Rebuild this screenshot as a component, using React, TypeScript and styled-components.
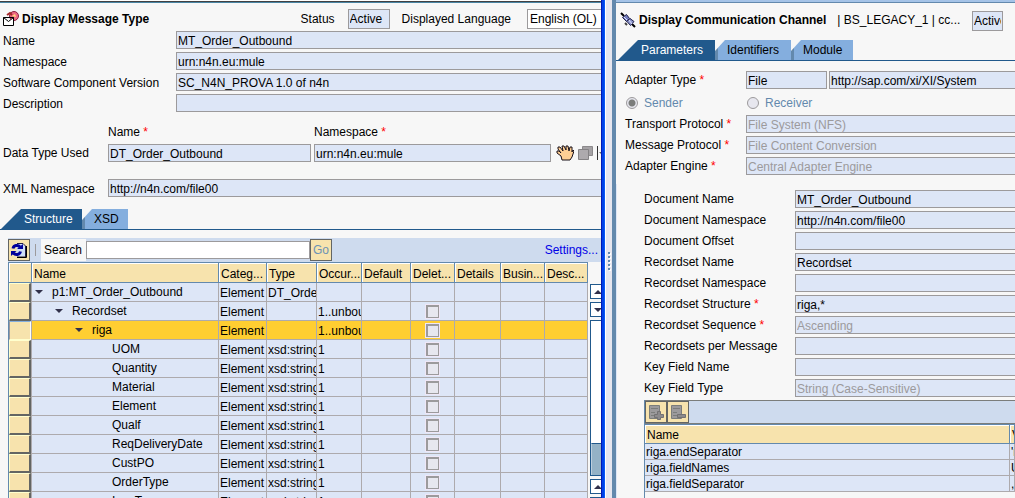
import React from "react";
import styled, { createGlobalStyle, css } from "styled-components";

const c = {
  panel: "#f7f7f7",
  field: "#dde6f7",
  border: "#9c9a9c",
  frame: "#6389ad",
  deep: "#21598c",
  tab: "#84aede",
  head: "#f7e3ad",
  bar: "#cedbee",
  grid: "#adaaad",
  gold: "#ffce31",
  shade: "#636563",
};

const Global = createGlobalStyle`
  *, *::before, *::after { box-sizing: border-box; }
  body { margin: 0; background: ${c.panel}; }
  body, input, select, button, table { font: 12px/16px "Liberation Sans", Arial, sans-serif; color: #000; }
`;

const Desktop = styled.div`
  display: grid;
  grid-template-columns: minmax(0, 601fr) 4px minmax(0, 410fr);
  height: 100vh;
  overflow: hidden;
`;

const Pane = styled.section`
  display: flex;
  flex-direction: column;
  min-width: 0;
  min-height: 0;
  overflow: hidden;
  background: ${c.panel};
  white-space: nowrap;
`;

const MessagePane = styled(Pane)`
  border-top: 1px solid #fff;
`;

const TopEdge = styled.div`
  flex: none;
  height: 2px;
  background: #4a86a5;
  border-top: 1px solid #424142;
`;

const WindowEdge = styled.div`
  background: linear-gradient(to right, #0018b5 0 1px, #0041e7 1px 3px, #0859f7 3px);
`;

const TitleRow = styled.header<{ $right?: boolean }>`
  display: flex;
  flex: none;
  align-items: center;
  height: ${(p) => (p.$right ? 37 : 28)}px;
  padding: ${(p) => (p.$right ? "0 0 4px 4px" : "3px 0 0 3px")};
`;

const Title = styled.h1`
  flex: none;
  margin: 0 0 0 3px;
  font-size: 12px;
  line-height: 16px;
`;

const Grow = styled.div`
  flex: 1;
`;

const StatusGroup = styled.label<{ $gap: number }>`
  display: flex;
  flex: none;
  align-items: center;
  gap: ${(p) => p.$gap}px;
  margin-left: 12px;
`;

const Field = styled.input<{ $muted?: boolean }>`
  display: block;
  width: 100%;
  min-width: 0;
  height: 18px;
  margin: 0;
  padding: 1px 1px 0;
  border: 1px solid ${c.border};
  border-radius: 0;
  outline: 0;
  background: ${c.field};
  color: ${(p) => (p.$muted ? "#9c9a9c" : "#000")};
`;

const StatusField = styled(Field)<{ $w: number }>`
  width: ${(p) => p.$w}px;
  height: 20px;
`;

const LanguageSelect = styled.select`
  appearance: none;
  width: 84px;
  height: 20px;
  margin: 0 -10px 0 0;
  padding: 0 2px;
  border: 1px solid ${c.border};
  border-radius: 0;
  background: #fff;
`;

const Fields = styled.div`
  display: flex;
  flex-direction: column;
  gap: 3px;
`;

const MessageRow = styled.div<{ $label?: number }>`
  display: grid;
  grid-template-columns: ${(p) => p.$label ?? 173}px minmax(0, 1fr);
  align-items: center;
  height: 18px;
  padding-left: 3px;
  > label { padding-top: 2px; }
`;

const Bleed = styled.div`
  margin-right: -4px;
`;

const TypeGrid = styled.div`
  display: grid;
  grid-template-columns: 105px minmax(0, 203fr) 3px minmax(0, 237fr) 50px;
  grid-template-rows: 24px 18px;
  align-items: center;
  margin-top: 8px;
  padding-left: 3px;
  > :nth-child(1) { grid-column: 2; }
  > :nth-child(2) { grid-column: 4; }
  > :nth-child(3) { grid-column: 1; grid-row: 2; }
  > :nth-child(4) { grid-column: 2; }
  > :nth-child(5) { grid-column: 4; }
  > :nth-child(6) { grid-column: 5; }
`;

const Required = styled.span`
  color: #f00;
`;

const Tools = styled.div`
  display: flex;
  align-items: center;
  gap: 4px;
  padding-left: 5px;
  overflow: hidden;
  svg { flex: none; }
`;

const GhostButton = styled.button`
  display: flex;
  flex: none;
  padding: 0;
  border: 0;
  background: none;
`;

const XmlBlock = styled.div`
  margin: 17px 0 12px;
`;

const TabBar = styled.div<{ $inset: number }>`
  display: flex;
  flex: none;
  height: 21px;
  padding-left: ${(p) => p.$inset}px;
  border-bottom: 1px solid ${c.deep};
`;

const Tab = styled.button<{ $active?: boolean; $w: number }>`
  width: ${(p) => p.$w}px;
  height: 20px;
  padding: 0;
  border: 0;
  text-align: left;
  ${(p) =>
    p.$active
      ? css`
          padding-left: 23px;
          background: ${c.deep};
          color: #fff;
          clip-path: polygon(20px 0, 100% 0, 100% 100%, 0 100%);
        `
      : css`
          padding-left: 12px;
          background: linear-gradient(to right, ${c.frame} 3px, ${c.tab} 3px);
          clip-path: polygon(10px 0, 100% 0, 100% 100%, 0 100%, 0 11px);
        `}
`;

const Outline = styled.div`
  display: flex;
  flex: 1;
  flex-direction: column;
  min-height: 0;
  margin: 8px 0 0 8px;
`;

const SearchBar = styled.div`
  display: flex;
  flex: none;
  align-items: center;
  height: 24px;
  padding-right: 3px;
  background: ${c.bar};
`;

const ToolButton = styled.button`
  display: flex;
  flex: none;
  align-items: center;
  justify-content: center;
  width: 22px;
  height: 22px;
  padding: 0;
  border: 1px solid ${c.shade};
  border-radius: 0;
  background: ${c.head};
  color: #6b92b5;
`;

const Divider = styled.i`
  width: 1px;
  height: 12px;
  margin: 0 5px;
  background: ${c.border};
`;

const SearchLabel = styled.label`
  display: flex;
  align-items: center;
  width: 45px;
  height: 22px;
  padding-left: 3px;
  background: ${c.panel};
`;

const SearchField = styled(Field)`
  flex: none;
  width: 224px;
  background: #fff;
`;

const Settings = styled.a`
  color: #0000e7;
  text-decoration: none;
`;

const Scroller = styled.div`
  display: flex;
  flex: 1;
  min-height: 0;
  overflow: hidden;
`;

const Table = styled.table<{ $row: number; $head: number }>`
  flex: 1;
  width: 100%;
  min-width: 0;
  align-self: flex-start;
  table-layout: fixed;
  border-spacing: 0;
  border-left: 1px solid ${c.frame};

  th, td {
    overflow: hidden;
    height: ${(p) => p.$row}px;
    padding: 1px 0 0 1px;
    border-right: 1px solid ${c.grid};
    border-bottom: 1px solid ${c.grid};
    font-weight: normal;
    text-align: left;
    text-overflow: clip;
    line-height: 14px;
    background: ${c.field};
  }
  thead th {
    height: ${(p) => p.$head}px;
    padding: 2px 0 0 2px;
    border-top: 1px solid ${c.frame};
    border-right-color: ${c.frame};
    border-bottom-color: ${c.frame};
    background: ${c.head};
    box-shadow: inset 1px 1px #fff;
  }
`;

const Row = styled.tr<{ $selected?: boolean }>`
  ${(p) => p.$selected && css`&& td { background: ${c.gold}; }`}
`;

const HandleCell = styled.td`
  && { padding: 0; background: ${c.field}; border-bottom: 0; }
`;

const Handle = styled.button<{ $pressed?: boolean }>`
  display: block;
  width: 22px;
  height: 19px;
  padding: 0;
  border: solid;
  border-width: ${(p) => (p.$pressed ? "1px" : "1px 2px 2px 1px")};
  border-color: ${(p) => (p.$pressed ? `${c.tab} #fff #ffffce ${c.border}` : `#ffffce ${c.shade} ${c.shade} #ffffce`)};
  background: ${c.head};
`;

const NodeLabel = styled.div<{ $depth: number }>`
  display: flex;
  align-items: center;
  gap: 8px;
  height: 16px;
  margin-bottom: 1px;
  padding-left: ${(p) => 2 + p.$depth * 20}px;
`;

const TwistyBox = styled.span`
  display: flex;
  width: 9px;
`;

const DeleteBox = styled.input`
  appearance: none;
  display: block;
  width: 13px;
  height: 13px;
  margin: 0 0 0 14px;
  border: 1px solid ${c.border};
  border-width: 2px 1px 1px 2px;
  background: #e7e7ef;
  box-shadow: 0 0 0 1px #efe7f7;
`;

const ScrollRail = styled.div`
  display: flex;
  flex: none;
  flex-direction: column;
  gap: 3px;
  width: 13px;
  margin-top: 22px;
  padding-left: 2px;
`;

const ScrollButton = styled.button`
  display: flex;
  flex: none;
  align-items: center;
  justify-content: center;
  width: 15px;
  height: 15px;
  padding: 0;
  border: 1px solid ${c.deep};
  background: #fff;
`;

const Track = styled.div`
  display: flex;
  flex: 1;
  flex-direction: column;
  justify-content: flex-end;
  width: 15px;
  border: 1px solid ${c.deep};
  background: #fff;
`;

const Thumb = styled.div`
  height: 32px;
  border-top: 1px solid ${c.deep};
  border-left: 1px solid #bdcfde;
  background: #94b2c6;
`;

const RailEnd = styled.div`
  display: flex;
  flex-direction: column;
  gap: 3px;
  height: 19px;
  overflow: hidden;
`;

const ChannelShell = styled.section`
  display: grid;
  grid-template-columns: 7px 4px minmax(0, 1fr);
  min-width: 0;
  min-height: 0;
`;

const Splitter = styled.div`
  display: flex;
  align-items: center;
  justify-content: center;
  padding-top: 26px;
  border-left: 1px solid #fff;
  background: #e6e6ef;
`;

const Frame = styled.div`
  background: ${c.frame};
`;

const ChannelTop = styled.div`
  flex: none;
  height: 3px;
  border-bottom: 1px solid ${c.frame};
  background: #a5c3e7;
`;

const ChannelName = styled.span`
  flex: none;
  margin-left: 11px;
`;

const ChannelStatus = styled(StatusField)`
  margin: 2px 12px 0 0;
`;

const AdapterForm = styled.div`
  display: grid;
  grid-template-columns: 121px minmax(0, 1fr);
  gap: 3px 0;
  margin: 10px 0 0 9px;
`;

const Label = styled.label`
  height: 18px;
  line-height: 18px;
`;

const AdapterPair = styled.div`
  display: grid;
  grid-template-columns: 81px minmax(0, 1fr);
  gap: 2px;
`;

const RadioRow = styled.fieldset`
  display: grid;
  grid-column: 1 / -1;
  grid-template-columns: 121px 1fr;
  height: 20px;
  margin: 0;
  padding: 2px 0 0;
  border: 0;
`;

const RadioLabel = styled.label`
  display: flex;
  align-items: center;
  gap: 5px;
  height: 18px;
  color: ${c.frame};
`;

const Radio = styled.input`
  appearance: none;
  width: 12px;
  height: 12px;
  margin: 0 1px;
  border: 1px solid ${c.border};
  border-radius: 50%;
  background: #e7e7ef;
  &:checked { background: radial-gradient(circle, #7b7d7b 0 3px, #e7e7ef 4px); }
`;

const ConversionArea = styled.div`
  display: flex;
  flex: 1;
  flex-direction: column;
  min-height: 0;
  margin-top: 9px;
  padding: 6px 0 0 27px;
  border-left: 1px solid #dde6f7;
`;

const ConversionForm = styled.div`
  display: grid;
  flex: none;
  grid-template-columns: 151px minmax(0, 1fr);
  gap: 3px 0;
`;

const ParameterBox = styled.div`
  flex: 1;
  margin-top: 3px;
  border-left: 1px solid ${c.frame};
`;

const ParameterBar = styled.div`
  display: flex;
  height: 24px;
  border-top: 1px solid #7b7d7b;
  border-bottom: 1px solid #7b7d7b;
  background: ${c.bar};
`;

const ParameterTable = styled(Table)`
  border-left: 0;
`;

const Arrow = ({ up }: { up?: boolean }) => (
  <svg width="8" height="4" viewBox="0 0 8 4" aria-hidden="true">
    <path d={up ? "M4 0 8 4H0z" : "M0 0H8L4 4z"} fill="#31304a" />
  </svg>
);

const MessageIcon = () => (
  <svg width="16" height="15" viewBox="0 0 16 15" aria-hidden="true">
    <circle cx="11" cy="5" r="4.5" fill="#ef6b84" stroke="#8c2042" />
    <path d="M9 5l3-2 1 3z" fill="#ffdf7b" />
    <path d="M4 4l3-2 2 2" fill="none" stroke="#a52829" strokeWidth="2" />
    <path d="M.5 6.500h10v8H.5zM.5 6.500l5 4 5-4" fill="#fff" stroke="#000" />
  </svg>
);

const PlugIcon = () => (
  <svg width="16" height="16" viewBox="0 0 16 16" aria-hidden="true">
    <path d="M1 1l3 3M12 12l3 3" stroke="#000" strokeWidth="2" />
    <path d="M2.500 5.500l4-3 3 4-3 3z" fill="#737dbd" stroke="#21204a" />
    <path d="M7 9.500l3-3 4 3-3.500 4z" fill="#8c96ce" stroke="#21204a" />
    <path d="M4 5l3 3M9 8l3 4" stroke="#dee3ff" />
    <path d="M5 11l2 2" stroke="#424142" strokeWidth="2" />
  </svg>
);

const HandIcon = () => (
  <svg width="18" height="16" viewBox="0 0 18 16" aria-hidden="true">
    <path
      d="M6 15L5 11 1 8V6h2l2 2-3-4V2h2l3 4-1-5h2l2 4V1h2l1 5 1-4h2v5l1-2 1 1-2 6-2 3z"
      fill="#ffcf94"
      stroke="#181018"
      strokeLinejoin="round"
    />
  </svg>
);

const CopyIcon = () => (
  <svg width="15" height="14" viewBox="0 0 15 14" aria-hidden="true">
    <path d="M4.500.500h10v9h-10z" fill="#a5a2a5" stroke="#8c8a8c" />
    <path d="M.500 3.500h10v10H.500z" fill="#adaaad" stroke="#848284" />
  </svg>
);

const MoreIcon = () => (
  <svg width="4" height="14" viewBox="0 0 4 14" aria-hidden="true">
    <path d="M.500 0v14" stroke="#313031" />
    <path d="M2 6h2v2z" fill="#636563" />
  </svg>
);

const RefreshIcon = () => (
  <svg width="18" height="18" viewBox="0 0 18 18" aria-hidden="true">
    <path d="M6.500 2.500h6l3 3v10h-9z" fill="#cedff7" />
    <path d="M7 2.500h6l2.500 2.500v11H7" fill="none" stroke="#21204a" />
    <path d="M16.500 5v11.500H7" fill="none" stroke="#000" />
    <path d="M3 7.500a4 4 0 0 1 7-1.500M10.500 10.500a4 4 0 0 1-7 1.500" fill="none" stroke="#00009c" strokeWidth="3" />
    <path d="M7 8h6V3zM6.500 10H1v5z" fill="#00009c" />
  </svg>
);

const RowEditIcon = ({ plus }: { plus?: boolean }) => (
  <svg width="16" height="15" viewBox="0 0 16 15" aria-hidden="true">
    <path d="M1.500.500h10v13h-10z" fill="#9c9a9c" stroke="#7b7d7b" />
    <path d="M3 3.500h7M3 7.500h4M3 10.500h5" stroke="#7b7d7b" />
    <path d={plus ? "M9.500 6.500h3v3h3v3h-3v2h-3v-2h-3v-3h3z" : "M7.500 9.500h8v3h-8z"} fill="#8c8a8c" stroke="#737173" />
  </svg>
);

const GripIcon = () => (
  <svg width="3" height="20" viewBox="0 0 3 20" aria-hidden="true">
    <path d="M2 1v20" stroke="#fff" strokeWidth="2" strokeDasharray="2 2" />
    <path d="M1 0v20" stroke={c.frame} strokeWidth="2" strokeDasharray="2 2" />
  </svg>
);

const Star = () => <Required> *</Required>;

const messageFields = [
  ["Name", "MT_Order_Outbound"],
  ["Namespace", "urn:n4n.eu:mule"],
  ["Software Component Version", "SC_N4N_PROVA 1.0 of n4n"],
  ["Description", ""],
];

type Node = { name: string; depth: number; type?: string; occurs?: string; open?: boolean; selected?: boolean };

const leaf = (name: string): Node => ({ name, depth: 3, type: "xsd:string", occurs: "1" });

const nodes: Node[] = [
  { name: "p1:MT_Order_Outbound", depth: 0, type: "DT_Order_Outbound", open: true },
  { name: "Recordset", depth: 1, occurs: "1..unbounded", open: true },
  { name: "riga", depth: 2, occurs: "1..unbounded", open: true, selected: true },
  ...["UOM", "Quantity", "Material", "Element", "Qualf", "ReqDeliveryDate", "CustPO", "OrderType", "IncoType"].map(leaf),
];

const columns: [string, number][] = [
  ["Categ...", 48],
  ["Type", 50],
  ["Occur...", 45],
  ["Default", 49],
  ["Delet...", 44],
  ["Details", 46],
  ["Busin...", 44],
  ["Desc...", 43],
];

const adapterFields = [
  ["Transport Protocol", "File System (NFS)"],
  ["Message Protocol", "File Content Conversion"],
  ["Adapter Engine", "Central Adapter Engine"],
];

type Conversion = { label: string; value?: string; required?: boolean; muted?: boolean };

const conversionFields: Conversion[] = [
  { label: "Document Name", value: "MT_Order_Outbound" },
  { label: "Document Namespace", value: "http://n4n.com/file00" },
  { label: "Document Offset" },
  { label: "Recordset Name", value: "Recordset" },
  { label: "Recordset Namespace" },
  { label: "Recordset Structure", value: "riga,*", required: true },
  { label: "Recordset Sequence", value: "Ascending", required: true, muted: true },
  { label: "Recordsets per Message" },
  { label: "Key Field Name" },
  { label: "Key Field Type", value: "String (Case-Sensitive)", muted: true },
];

const parameters = [
  ["riga.endSeparator", "'nl'"],
  ["riga.fieldNames", "UOM"],
  ["riga.fieldSeparator", ","],
];

function StructureTable() {
  return (
    <Table $row={19} $head={21}>
      <colgroup>
        <col width="23" />
        <col />
        {columns.map(([name, width]) => (
          <col key={name} width={width} />
        ))}
      </colgroup>
      <thead>
        <tr>
          <th aria-label="Row" />
          <th>Name</th>
          {columns.map(([name]) => (
            <th key={name}>{name}</th>
          ))}
        </tr>
      </thead>
      <tbody>
        {nodes.map((n) => (
          <Row key={n.name} $selected={n.selected}>
            <HandleCell>
              <Handle $pressed={n.selected} aria-label={`Select ${n.name}`} />
            </HandleCell>
            <td>
              <NodeLabel $depth={n.depth}>
                <TwistyBox>{n.open && <Arrow />}</TwistyBox>
                {n.name}
              </NodeLabel>
            </td>
            <td>Element</td>
            <td>{n.type}</td>
            <td>{n.occurs}</td>
            <td />
            <td>{n.depth > 0 && <DeleteBox type="checkbox" disabled aria-label={`Delete ${n.name}`} />}</td>
            <td />
            <td />
            <td />
          </Row>
        ))}
      </tbody>
    </Table>
  );
}

function MessageType() {
  return (
    <MessagePane>
      <TopEdge />
      <TitleRow>
        <MessageIcon />
        <Title>Display Message Type</Title>
        <Grow />
        <StatusGroup $gap={13}>
          Status
          <StatusField $w={42} readOnly value="Active" />
        </StatusGroup>
        <StatusGroup $gap={16}>
          Displayed Language
          <LanguageSelect>
            <option>English (OL)</option>
          </LanguageSelect>
        </StatusGroup>
      </TitleRow>
      <Fields>
        {messageFields.map(([label, value], i) => (
          <MessageRow key={label}>
            <label htmlFor={`message-${i}`}>{label}</label>
            <Bleed>
              <Field id={`message-${i}`} readOnly value={value} />
            </Bleed>
          </MessageRow>
        ))}
      </Fields>
      <TypeGrid>
        <label htmlFor="dt-name">Name<Star /></label>
        <label htmlFor="dt-namespace">Namespace<Star /></label>
        <span>Data Type Used</span>
        <Field id="dt-name" readOnly value="DT_Order_Outbound" />
        <Field id="dt-namespace" readOnly value="urn:n4n.eu:mule" />
        <Tools>
          <GhostButton aria-label="Pick data type"><HandIcon /></GhostButton>
          <GhostButton aria-label="Copy"><CopyIcon /></GhostButton>
          <MoreIcon />
        </Tools>
      </TypeGrid>
      <XmlBlock>
        <MessageRow $label={105}>
          <label htmlFor="xml-namespace">XML Namespace</label>
          <Bleed>
            <Field id="xml-namespace" readOnly value="http://n4n.com/file00" />
          </Bleed>
        </MessageRow>
      </XmlBlock>
      <TabBar $inset={1} role="tablist">
        <Tab $active $w={81} role="tab" aria-selected>Structure</Tab>
        <Tab $w={46} role="tab">XSD</Tab>
      </TabBar>
      <Outline>
        <SearchBar>
          <ToolButton aria-label="Refresh"><RefreshIcon /></ToolButton>
          <Divider />
          <SearchLabel htmlFor="search">Search</SearchLabel>
          <SearchField id="search" />
          <ToolButton>Go</ToolButton>
          <Grow />
          <Settings href="#settings">Settings...</Settings>
        </SearchBar>
        <Scroller>
          <StructureTable />
          <ScrollRail>
            <ScrollButton aria-label="Scroll up"><Arrow up /></ScrollButton>
            <ScrollButton aria-label="Scroll down"><Arrow /></ScrollButton>
            <Track><Thumb /></Track>
            <RailEnd>
              <ScrollButton aria-label="Previous page"><Arrow up /></ScrollButton>
              <ScrollButton aria-label="Next page"><Arrow /></ScrollButton>
            </RailEnd>
          </ScrollRail>
        </Scroller>
      </Outline>
    </MessagePane>
  );
}

function Channel() {
  return (
    <Pane>
      <ChannelTop />
      <TitleRow $right>
        <PlugIcon />
        <Title>Display Communication Channel</Title>
        <ChannelName>| BS_LEGACY_1 | cc...</ChannelName>
        <Grow />
        <ChannelStatus $w={31} readOnly value="Active" aria-label="Status" />
      </TitleRow>
      <TabBar $inset={2} role="tablist">
        <Tab $active $w={97} role="tab" aria-selected>Parameters</Tab>
        <Tab $w={76} role="tab">Identifiers</Tab>
        <Tab $w={62} role="tab">Module</Tab>
      </TabBar>
      <AdapterForm>
        <Label htmlFor="adapter-type">Adapter Type<Star /></Label>
        <AdapterPair>
          <Field id="adapter-type" readOnly value="File" />
          <Bleed>
            <Field aria-label="Adapter namespace" readOnly value="http://sap.com/xi/XI/System" />
          </Bleed>
        </AdapterPair>
        <RadioRow>
          <RadioLabel><Radio type="radio" name="direction" defaultChecked disabled />Sender</RadioLabel>
          <RadioLabel><Radio type="radio" name="direction" disabled />Receiver</RadioLabel>
        </RadioRow>
        {adapterFields.map(([label, value], i) => (
          <React.Fragment key={label}>
            <Label htmlFor={`adapter-${i}`}>{label}<Star /></Label>
            <Bleed>
              <Field id={`adapter-${i}`} $muted readOnly value={value} />
            </Bleed>
          </React.Fragment>
        ))}
      </AdapterForm>
      <ConversionArea>
        <ConversionForm>
          {conversionFields.map((f, i) => (
            <React.Fragment key={f.label}>
              <Label htmlFor={`conversion-${i}`}>{f.label}{f.required && <Star />}</Label>
              <Bleed>
                <Field id={`conversion-${i}`} $muted={f.muted} readOnly value={f.value ?? ""} />
              </Bleed>
            </React.Fragment>
          ))}
        </ConversionForm>
        <ParameterBox>
          <ParameterBar>
            <ToolButton aria-label="Add row"><RowEditIcon plus /></ToolButton>
            <ToolButton aria-label="Remove row"><RowEditIcon /></ToolButton>
          </ParameterBar>
          <ParameterTable $row={16} $head={20}>
            <colgroup>
              <col />
              <col width="5" />
            </colgroup>
            <thead>
              <tr><th>Name</th><th>Value</th></tr>
            </thead>
            <tbody>
              {parameters.map(([name, value]) => (
                <tr key={name}><td>{name}</td><td>{value}</td></tr>
              ))}
            </tbody>
          </ParameterTable>
        </ParameterBox>
      </ConversionArea>
    </Pane>
  );
}

export default function App() {
  return (
    <>
      <Global />
      <Desktop>
        <MessageType />
        <WindowEdge />
        <ChannelShell>
          <Splitter><GripIcon /></Splitter>
          <Frame />
          <Channel />
        </ChannelShell>
      </Desktop>
    </>
  );
}
